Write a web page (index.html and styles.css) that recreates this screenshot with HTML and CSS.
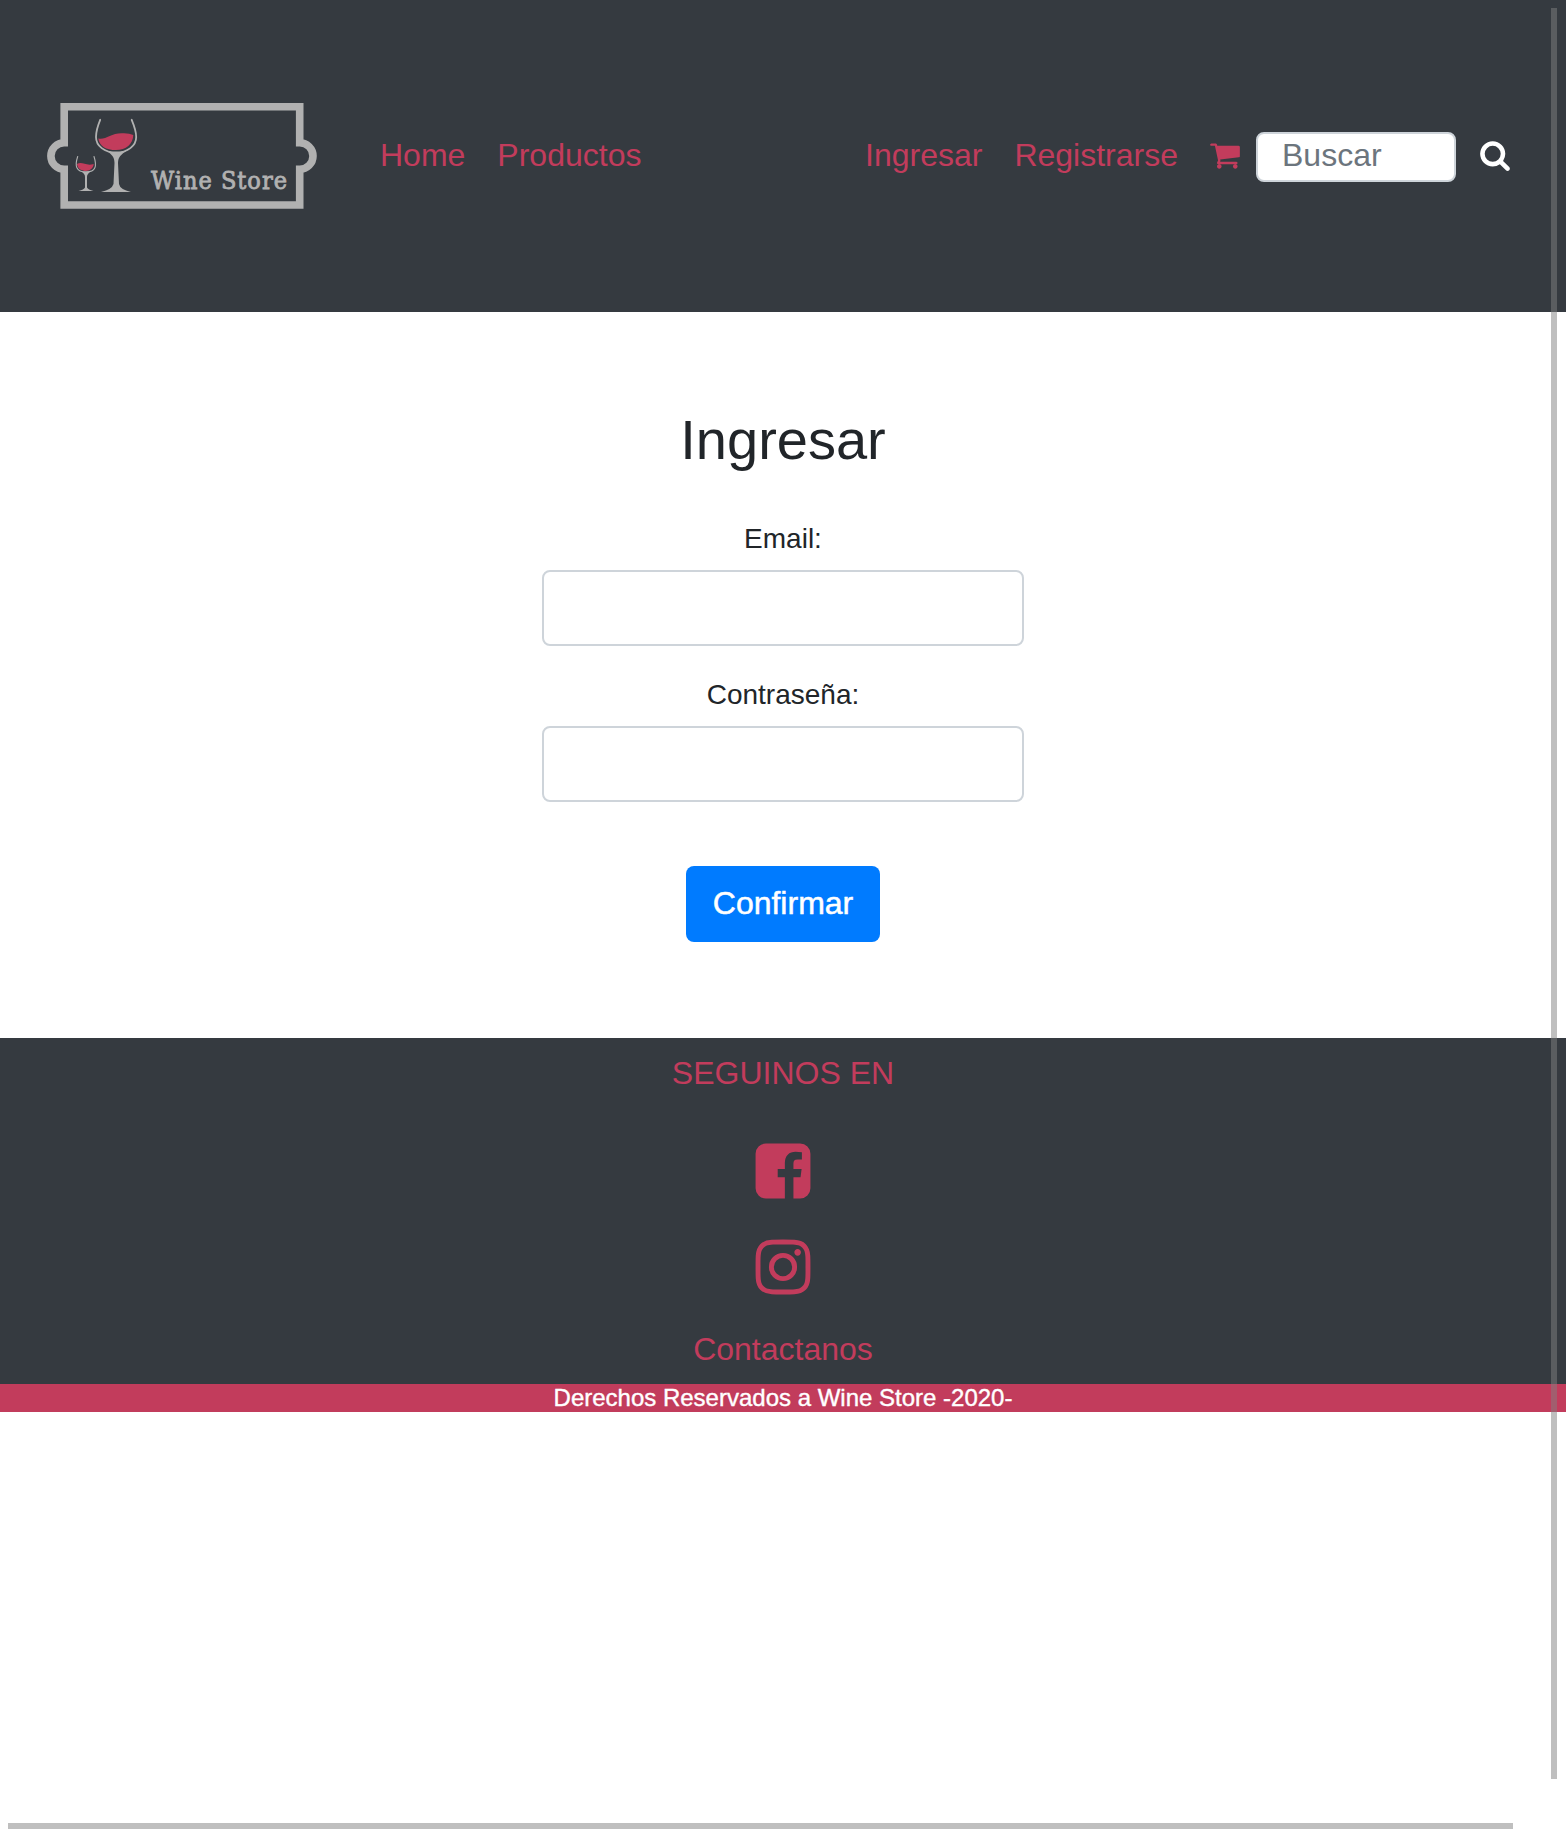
FILE: index.html
```html
<!DOCTYPE html>
<html lang="es">
<head>
<meta charset="utf-8">
<title>Wine Store</title>
<link rel="stylesheet" href="styles.css">
</head>
<body>
<header class="navbar">
  <a class="brand" aria-label="Wine Store">
    <svg class="logo" viewBox="0 0 280 110" width="280" height="110">
      <path class="frame" d="M24.200 5.800H259.700V41.700A13.300 13.300 0 0 1 259.700 68.300V104H24.200V68.300A13.300 13.300 0 0 1 24.200 41.700Z"/>
      <g class="glass">
        <path class="wine" d="M58.300 37.400C65 39.500 71 32 82 32.200Q89 31.800 93.300 34C93 43 86 49 76 49S59.500 45 58.300 37.400Z"/>
        <path class="bowl" d="M60.200 18.800C57.200 26 56 31 56 36C56 45 64.500 51.500 76 51.500S96.200 45 96.200 36C96.200 31 94.700 26 91.700 18.800"/>
        <path class="stem" d="M66 49.500Q76 53 87 49.500C81 53.500 78 56 78 62L79 83Q80 88.500 91 91H61Q72 88.500 73.500 83L74.500 62C74.500 56 72 53.500 66 49.500Z"/>
      </g>
      <g class="small-glass">
        <path class="wine" d="M37 63C42 60 46 65.500 53.700 63C53.500 67 50 70 46 70S37.500 68 37 63Z"/>
        <path class="bowl" d="M37.700 55.500C34.500 65 36 71 46 71S57 65 54 55.500"/>
        <path class="stem" d="M41 70.500H51Q47 72.500 47 76V86.500Q48 88.500 53.500 90H38.500Q44 88.500 45 86.500V76Q45 72.500 41 70.500Z"/>
      </g>
      <text class="wordmark" x="111" y="88.400" textLength="136" lengthAdjust="spacing">Wine Store</text>
    </svg>
  </a>
  <nav class="links">
    <a>Home</a>
    <a>Productos</a>
  </nav>
  <nav class="links account">
    <a>Ingresar</a>
    <a>Registrarse</a>
    <a class="icon-link"><svg class="icon" viewBox="64 0 1664 1792"><path d="M704 1536q0 52-38 90t-90 38-90-38-38-90 38-90 90-38 90 38 38 90zm896 0q0 52-38 90t-90 38-90-38-38-90 38-90 90-38 90 38 38 90zm128-1088v512q0 24-16.500 42.500t-40.500 21.500l-1044 122q13 60 13 70 0 16-24 64h920q26 0 45 19t19 45-19 45-45 19h-1024q-26 0-45-19t-19-45q0-11 8-31.500t16-36 21.500-40 15.500-29.500l-177-823h-204q-26 0-45-19t-19-45 19-45 45-19h256q16 0 28.500 6.500t19.500 15.500 13 24.500 8 26 5.500 29.500 4.500 26h1201q26 0 45 19t19 45z"/></svg></a>
  </nav>
  <form class="search">
    <input class="search-input" type="text" placeholder="Buscar">
    <button class="search-button" type="button" aria-label="Buscar"><svg class="icon" viewBox="64 0 1664 1792"><path d="M1216 832q0-185-131.500-316.500t-316.500-131.500-316.500 131.500-131.500 316.500 131.500 316.500 316.500 131.500 316.500-131.500 131.500-316.500zm512 832q0 52-38 90t-90 38q-54 0-90-38l-343-342q-179 124-399 124-143 0-273.500-55.500t-225-150-150-225-55.500-273.500 55.500-273.500 150-225 225-150 273.500-55.500 273.500 55.500 225 150 150 225 55.500 273.500q0 220-124 399l343 343q37 37 37 90z"/></svg></button>
  </form>
</header>
<main class="login">
  <h1>Ingresar</h1>
  <form class="login-form">
    <label for="email">Email:</label>
    <input id="email" class="field" type="text">
    <label for="password">Contraseña:</label>
    <input id="password" class="field" type="password">
    <button class="submit" type="button">Confirmar</button>
  </form>
</main>
<footer class="footer">
  <p class="follow">SEGUINOS EN</p>
  <a class="social" aria-label="Facebook"><svg viewBox="112 0 1568 1792"><path d="M1376 128q119 0 203.500 84.500t84.500 203.500v960q0 119-84.500 203.500t-203.500 84.500h-188v-595h199l30-232h-229v-148q0-56 23.500-84t91.500-28l122-1v-207q-63-9-178-9-136 0-217.500 80t-81.500 226v171h-200v232h200v595h-532q-119 0-203.500-84.500t-84.500-203.500v-960q0-119 84.500-203.500t203.500-84.500h960z"/></svg></a>
  <a class="social" aria-label="Instagram"><svg viewBox="112 0 1568 1792"><path d="M1152 896q0-106-75-181t-181-75-181 75-75 181 75 181 181 75 181-75 75-181zm138 0q0 164-115 279t-279 115-279-115-115-279 115-279 279-115 279 115 115 279zm108-410q0 38-27 65t-65 27-65-27-27-65 27-65 65-27 65 27 27 65zm-502-220q-7 0-76.500-.5t-105.500 0-96.500 3-103 10-71.500 18.500q-50 20-88 58t-58 88q-11 29-18.500 71.500t-10 103-3 96.500 0 105.500.5 76.500-.5 76.500 0 105.500 3 96.500 10 103 18.500 71.500q20 50 58 88t88 58q29 11 71.500 18.500t103 10 96.500 3 105.500 0 76.500-.5 76.500.5 105.500 0 96.500-3 103-10 71.500-18.500q50-20 88-58t58-88q11-29 18.500-71.500t10-103 3-96.500 0-105.500-.5-76.500.5-76.500 0-105.500-3-96.500-10-103-18.500-71.500q-20-50-58-88t-88-58q-29-11-71.500-18.500t-103-10-96.500-3-105.500 0-76.500.5zm768 630q0 229-5 317-10 208-124 322t-322 124q-88 5-317 5t-317-5q-208-10-322-124t-124-322q-5-88-5-317t5-317q10-208 124-322t322-124q88-5 317-5t317 5q208 10 322 124t124 322q5 88 5 317z"/></svg></a>
  <a class="contact">Contactanos</a>
  <p class="rights">Derechos Reservados a Wine Store -2020-</p>
</footer>
<div class="scroll-y"></div>
<div class="scroll-x"></div>
</body>
</html>
```
FILE: styles.css
```css
* { box-sizing: border-box; }
body {
  position: relative;
  min-height: 1838px;
  margin: 0;
  background: #fff;
  color: #212529;
  font: 32px/48px "Liberation Sans", Arial, sans-serif;
  overflow: hidden;
}
p, h1 { margin: 0; font-weight: 400; }
input, button { font: inherit; }
svg { display: block; }

.navbar {
  display: flex;
  align-items: center;
  height: 312px;
  padding: 0 56px 0 40px;
  background: #353a40;
  color: #c23c5c;
}
.brand { margin-right: 60px; }
.frame { fill: none; stroke: #b1b1b1; stroke-width: 7.6; }
.wine { fill: #c23c5c; }
.bowl { fill: none; stroke: #b1b1b1; stroke-width: 1.8; stroke-linecap: round; }
.small-glass .bowl { stroke-width: 1.1; }
.stem { fill: #b1b1b1; }
.wordmark {
  fill: #b1b1b1;
  stroke: #b1b1b1;
  stroke-width: .8;
  font: 25px "DejaVu Serif Condensed", "DejaVu Serif", serif;
}
.links { display: flex; align-items: center; gap: 32px; padding-bottom: 2px; }
.account { margin-left: auto; margin-right: 16px; }
.icon { width: 30px; height: 32px; fill: currentColor; }
.icon-link { padding-bottom: 1px; }
.search { display: flex; align-items: center; padding-top: 2px; }
.search-input {
  width: 200px;
  height: 50px;
  padding: 0 24px 4px;
  border: 2px solid #ced4da;
  border-radius: 8px;
  background: #fff;
}
.search-input::placeholder { color: #6c757d; opacity: 1; }
.search-button {
  margin-left: 24px;
  padding: 0 0 4px;
  border: 0;
  background: none;
  color: #fff;
}

.login {
  height: 726px;
  padding-top: 94px;
  text-align: center;
}
h1 { font-size: 56px; line-height: 67px; }
.login-form {
  display: flex;
  flex-direction: column;
  align-items: center;
  padding-top: 45px;
}
label { height: 42px; margin-bottom: 10px; font-size: 28px; line-height: 42px; }
.field {
  width: 482px;
  height: 76px;
  margin-bottom: 28px;
  padding: 12px 24px;
  border: 2px solid #ced4da;
  border-radius: 8px;
  background: #fff;
}
.submit {
  width: 194px;
  height: 76px;
  margin-top: 36px;
  padding: 0 0 2px;
  border: 0;
  border-radius: 8px;
  background: #007bff;
  color: #fff;
  -webkit-text-stroke: .5px #fff;
}

.footer {
  display: flex;
  flex-direction: column;
  align-items: center;
  height: 374px;
  padding-top: 11px;
  background: #353a40;
  color: #c23c5c;
}
.follow { margin-bottom: 42px; }
.social { height: 96px; }
.social svg { width: 56px; height: 64px; margin-top: .4px; fill: currentColor; }
.contact { margin-top: -6px; }
.rights {
  width: 100%;
  height: 28px;
  margin-top: auto;
  background: #c23c5c;
  color: #fff;
  font-size: 24px;
  line-height: 28px;
  text-align: center;
  -webkit-text-stroke: .4px #fff;
}

/* Overlay scrollbars */
.scroll-y, .scroll-x { position: absolute; background: rgba(128, 128, 128, .5); }
.scroll-y { top: 8px; left: 1551px; width: 6px; height: 1771px; }
.scroll-x { top: 1823px; left: 8px; width: 1505px; height: 6px; }
```
